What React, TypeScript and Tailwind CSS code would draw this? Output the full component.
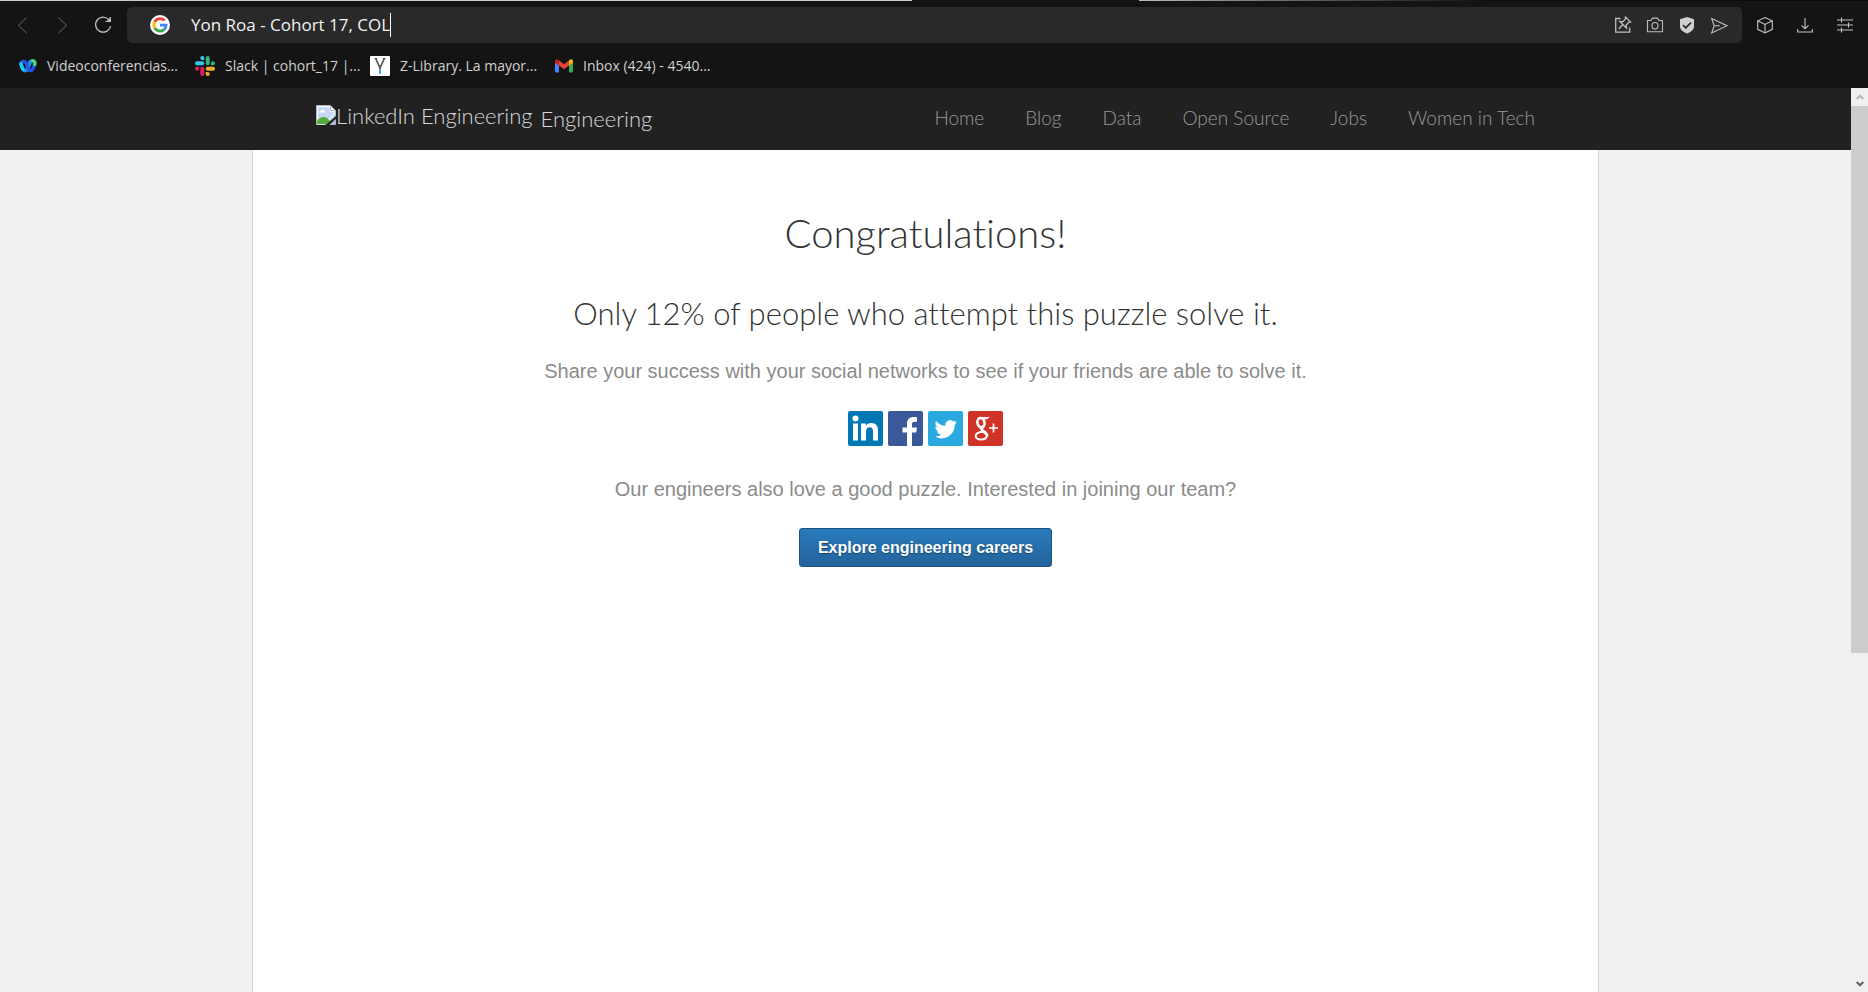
import type { ReactNode } from "react";

const bookmarks = [
  { label: "Videoconferencias...", icon: <WebexIcon />, width: "w-[164px]" },
  { label: "Slack | cohort_17 |...", icon: <SlackIcon />, width: "w-[163px]" },
  { label: "Z-Library. La mayor...", icon: <ZLibraryIcon />, width: "w-[173px]" },
  { label: "Inbox (424) - 4540...", icon: <GmailIcon />, width: "w-[165px]" },
];

const navLinks = ["Home", "Blog", "Data", "Open Source", "Jobs", "Women in Tech"];

const shareLinks = [
  { label: "LinkedIn", icon: <LinkedInIcon /> },
  { label: "Facebook", icon: <FacebookIcon /> },
  { label: "Twitter", icon: <TwitterIcon /> },
  { label: "Google Plus", icon: <GooglePlusIcon /> },
];

function GoogleIcon() {
  return (
    <svg viewBox="0 0 20 20" className="size-5 shrink-0" aria-hidden="true">
      <circle cx="10" cy="10" r="10" fill="#fff" />
      <g fill="none" strokeWidth="2.8">
        <path d="M14.6 5.6A6.1 6.1 0 0 0 4.7 7" stroke="#ea4335" />
        <path d="M4.7 7a6.1 6.1 0 0 0 0 6" stroke="#fbbc05" />
        <path d="M4.7 13a6.1 6.1 0 0 0 9.3 1.6" stroke="#34a853" />
        <path d="M14 14.6a6 6 0 0 0 2.1-4.4H10" stroke="#4285f4" />
      </g>
    </svg>
  );
}

function WebexIcon() {
  return (
    <svg viewBox="0 0 18 14" className="w-[18px] shrink-0" aria-hidden="true">
      <path d="M10.500 3.500c1.500-2.200 4.600-2.200 5 .3-.4 4-1.700 7.600-4 7.700-2.200.1-3-2.500-3.800-5" fill="none" stroke="#1d52e8" strokeWidth="3.600" />
      <path d="M11.500 3c1.500-1.800 4-1.600 4.500.4.200.8 0 1.600-.2 2.400" fill="none" stroke="#4fe06a" strokeWidth="3" strokeLinecap="round" />
      <path d="M2 4.800c.9 4 2.200 6.800 4.400 6.800 2.600-.2 3.200-4.400 4.400-8" fill="none" stroke="#1b8df5" strokeWidth="3.800" strokeLinecap="round" />
      <path d="M2.200 4.800C2.400 2 5.400 1.600 6.800 3.800c1.200 2 1.700 4.600 3 6.800" fill="none" stroke="#2057e8" strokeWidth="3.200" strokeLinecap="round" />
      <path d="M2 4.800c.5 2.400 1.200 4.300 2.100 5.700" fill="none" stroke="#16d4f0" strokeWidth="3.200" strokeLinecap="round" />
    </svg>
  );
}

function SlackIcon() {
  return (
    <svg viewBox="0 0 20 20" className="size-5 shrink-0" aria-hidden="true">
      <g fill="#36c5f0">
        <rect y="5.300" width="9.200" height="4" rx="2" />
        <path d="M7.300 0a2 2 0 0 1 2 2v2h-2a2 2 0 0 1 0-4z" />
      </g>
      <g fill="#2eb67d">
        <rect x="10.700" width="4" height="9.200" rx="2" />
        <path d="M20 7.300a2 2 0 0 1-2 2h-2v-2a2 2 0 0 1 4 0z" />
      </g>
      <g fill="#ecb22e">
        <rect x="10.700" y="10.700" width="9.300" height="4" rx="2" />
        <path d="M12.700 20a2 2 0 0 1-2-2v-2h2a2 2 0 0 1 0 4z" />
      </g>
      <g fill="#e01e5a">
        <rect x="5.300" y="10.700" width="4" height="9.300" rx="2" />
        <path d="M0 12.700a2 2 0 0 1 2-2h2v2a2 2 0 0 1-4 0z" />
      </g>
    </svg>
  );
}

function ZLibraryIcon() {
  return (
    <svg viewBox="0 0 20 20" className="size-5 shrink-0" aria-hidden="true">
      <rect width="20" height="20" rx="1" fill="#fff" />
      <path d="M5.700 2.500 10 12l4.300-9.500" fill="none" stroke="#555" strokeWidth="1.700" />
      <path d="M4.500 2.500h2.600M13 2.500h2.600" stroke="#555" />
      <path d="M10 9.500V13" stroke="#555" strokeWidth="2" />
      <path d="M10 13.500v4.300" stroke="#29abe2" strokeWidth="2" />
    </svg>
  );
}

function GmailIcon() {
  return (
    <svg viewBox="0 0 18 14" className="w-[18px] shrink-0" aria-hidden="true">
      <path d="M0 3.500 4 6v7.500H1.200A1.200 1.200 0 0 1 0 12.300z" fill="#4285f4" />
      <path d="M18 3.500 14 6v7.500h2.800a1.200 1.200 0 0 0 1.200-1.200z" fill="#34a853" />
      <path d="M4 1.500 9 5.300l5-3.800v5L9 10.300 4 6.500z" fill="#ea4335" />
      <path d="M0 2.300C0 .4 2-.5 3.500.9l.5.6v5L0 3.800z" fill="#c5221f" />
      <path d="M18 2.300c0-1.900-2-2.800-3.500-1.400l-.5.6v5l4-2.700z" fill="#fbbc04" />
    </svg>
  );
}

function LineIcon({ children, className = "text-[#bdbdbd]" }: { children: ReactNode; className?: string }) {
  return (
    <svg
      viewBox="0 0 18 18"
      className={`size-[18px] shrink-0 ${className}`}
      fill="none"
      stroke="currentColor"
      strokeWidth="1.100"
      aria-hidden="true"
    >
      {children}
    </svg>
  );
}

function BrokenImageIcon() {
  return (
    <svg viewBox="0 0 20 20" className="size-5 shrink-0" aria-hidden="true">
      <path d="M.5.500h14l5 5v14H.500z" fill="#c3d9f7" stroke="#b5b5b5" />
      <path d="M1.500 1.500H14v4.800h4.500V8L9 19H1.500z" fill="#c3d9f7" stroke="#fff" />
      <path d="M14.500.500v5h5z" fill="#fff" stroke="#aaa" strokeWidth=".8" />
      <path d="M3.500 7.500a1.500 1.500 0 0 1 1.600-1.800 2 2 0 0 1 3.600.3 1.300 1.300 0 0 1 .8 1.500z" fill="#fff" />
      <path d="M1 19v-3c3-4.500 7.500-5 10.500-2.500L14 16l-3 3z" fill="#55ac39" />
      <path d="m9.500 20 10.500-9v3L13.500 20z" fill="#212121" />
      <path d="M14 19.500 19.500 14v5.500z" fill="#aab9cc" />
    </svg>
  );
}

function LinkedInIcon() {
  return (
    <svg viewBox="0 0 35 35" className="size-[35px]" aria-hidden="true">
      <rect width="35" height="35" rx="2" fill="#0077b5" />
      <circle cx="7.500" cy="7.500" r="3" fill="#fff" />
      <path d="M5 12.500h5V29.500H5zM13 12.500h4.800v2.300c1-1.700 2.800-2.800 5.300-2.800 5 0 6.900 3 6.900 7.800v9.700h-5v-8.700c0-2.800-.7-4.500-3.200-4.500-2.700 0-3.800 1.900-3.800 4.600v8.600h-5z" fill="#fff" />
    </svg>
  );
}

function FacebookIcon() {
  return (
    <svg viewBox="0 0 35 35" className="size-[35px]" aria-hidden="true">
      <rect width="35" height="35" rx="2" fill="#3b5998" />
      <path d="M19 35V21.500h-4.500v-5H19v-3.800C19 8.300 21.600 6 25.500 6c1.700 0 3 .1 3.500.2v4.500h-2.400c-2 0-2.600 1-2.600 2.600v3.200h4.900l-.7 5H24V35z" fill="#fff" />
    </svg>
  );
}

function TwitterIcon() {
  return (
    <svg viewBox="0 0 35 35" className="size-[35px]" aria-hidden="true">
      <rect width="35" height="35" rx="2" fill="#2aa9e0" />
      <path
        transform="translate(6.500 7) scale(.94)"
        d="M23.950 4.570a10 10 0 0 1-2.820.77 4.960 4.960 0 0 0 2.160-2.720c-.95.560-2 .960-3.130 1.190a4.920 4.920 0 0 0-8.380 4.480C7.690 8.090 4.070 6.130 1.640 3.160a4.820 4.820 0 0 0-.67 2.480c0 1.710.87 3.210 2.190 4.100a4.900 4.900 0 0 1-2.230-.62v.060a4.920 4.920 0 0 0 3.950 4.830 5 5 0 0 1-2.210.080 4.940 4.940 0 0 0 4.600 3.420A9.870 9.870 0 0 1 0 19.540a13.990 13.990 0 0 0 7.550 2.210c9.050 0 14-7.500 14-13.980 0-.210 0-.420-.020-.630A9.940 9.940 0 0 0 24 4.590z"
        fill="#fff"
      />
    </svg>
  );
}

function GooglePlusIcon() {
  return (
    <svg viewBox="0 0 35 35" className="size-[35px]" aria-hidden="true">
      <rect width="35" height="35" rx="2" fill="#d03427" />
      <g fill="none" stroke="#fff">
        <ellipse cx="13" cy="11.700" rx="3.500" ry="4.700" strokeWidth="2.600" transform="rotate(-12 13 11.700)" />
        <path d="M13 6.700h7l-2 1.300h-2" strokeWidth="1.200" />
        <path d="M15.500 15.500c-2.500 1.800-3 2.700-.8 4.200s4.800 2.800 4.300 5.500" strokeWidth="2.800" />
        <path d="M19 24.800c-.5 2.600-3 3.700-6 3.700-3.500 0-5.400-1.500-5.300-3.500.1-2.600 3.200-4.200 7.800-4.300" strokeWidth="2" />
        <path d="M25.500 12.500v9M21 17h9" strokeWidth="1.700" />
      </g>
    </svg>
  );
}

function ToolbarButton({ label, children }: { label: string; children: ReactNode }) {
  return (
    <button type="button" aria-label={label} className="flex shrink-0 items-center justify-center">
      {children}
    </button>
  );
}

function BrowserChrome() {
  return (
    <header className="bg-[#141414] font-['Open_Sans','Noto_Sans',sans-serif]">
      <div className="flex h-px" aria-hidden="true">
        <div className="w-[48.8%] bg-[#c9cccb]" />
        <div className="w-[12.2%] bg-[#141414]" />
        <div className="flex-1 bg-linear-to-r from-[#b9bcbb] to-[#0a0a0a] to-50%" />
      </div>
      <div className="flex items-center pt-1.5 pr-3.5 pl-3.5">
        <div className="flex w-[113px] shrink-0 gap-[22px]">
          <ToolbarButton label="Back">
            <LineIcon className="text-[#4a4a4a]">
              <path d="M12.500 1.500 4.500 9.300l8 7.700" />
            </LineIcon>
          </ToolbarButton>
          <ToolbarButton label="Forward">
            <LineIcon className="text-[#4a4a4a]">
              <path d="m4.500 1.500 8 7.800-8 7.700" />
            </LineIcon>
          </ToolbarButton>
          <ToolbarButton label="Reload">
            <LineIcon className="text-[#c4c4c4]">
              <path d="M15.600 4.900A7.500 7.500 0 1 0 16.500 10M16.300 1v4.500h-4.800" strokeWidth="1.200" />
              <path d="M16.500 1.500v4h-4z" fill="currentColor" stroke="none" />
            </LineIcon>
          </ToolbarButton>
        </div>
        <div className="flex h-9 min-w-0 flex-1 items-center rounded-[5px] bg-[#292929] pr-3.5 pl-[23px]">
          <GoogleIcon />
          <div className="flex min-w-0 flex-1 items-center pl-[21px]">
            <input
              type="text"
              aria-label="Address"
              defaultValue="Yon Roa - Cohort 17, COL"
              className="field-sizing-content bg-transparent text-[17px] leading-6 text-[#f2f2f2] outline-none"
            />
            <span className="h-6 w-px bg-white" aria-hidden="true" />
          </div>
          <div className="flex gap-3.5">
            <ToolbarButton label="Pin">
              <LineIcon>
                <path d="M6.500 2.500H1.700v13.700h14v-4.700" strokeWidth="1.300" />
                <path d="m11.500 1 5 5-1.700.3-2.500 2.500.2 3.200-6.700-6.500 3.200.1L11.300 3zM8.700 8.800l-4 4.200" strokeWidth="1.300" />
              </LineIcon>
            </ToolbarButton>
            <ToolbarButton label="Snapshot">
              <LineIcon>
                <path d="M1.500 4.500H5l1.500-2.400h5L13 4.500h3.500v11.300h-15z" strokeLinejoin="round" />
                <ellipse cx="9" cy="9.800" rx="3" ry="3.300" />
              </LineIcon>
            </ToolbarButton>
            <ToolbarButton label="Ad blocker">
              <LineIcon>
                <path d="m9 1 7 2.200v7.300c0 3.500-4 6-7 7-3-1-7-3.500-7-7V3.200z" fill="#cfcfcf" stroke="none" />
                <path d="m5 9.200 2.800 2.600L13 6.700" stroke="#292929" strokeWidth="1.700" />
              </LineIcon>
            </ToolbarButton>
            <ToolbarButton label="Send">
              <LineIcon>
                <path d="M1.700 2.500 17 9.700 1.700 17l2.500-7.300z" />
                <path d="M4.200 9.700h5.500" />
              </LineIcon>
            </ToolbarButton>
          </div>
        </div>
        <div className="flex shrink-0 gap-[22px] pl-3.5">
          <ToolbarButton label="Wallet">
            <LineIcon className="text-[#c4c4c4]">
              <path d="m9 1.500 7.300 3.300v8.500L9 17l-7.300-3.700V4.800zM1.700 4.800 9 8.500l7.300-3.700M9 8.500V17" />
            </LineIcon>
          </ToolbarButton>
          <ToolbarButton label="Downloads">
            <LineIcon className="text-[#c4c4c4]">
              <path d="M9 2v10.500M5.500 9.300 9 12.700l3.500-3.400M1.700 13v3h14.600v-3" />
            </LineIcon>
          </ToolbarButton>
          <ToolbarButton label="Easy setup">
            <LineIcon className="text-[#c4c4c4]">
              <path d="M1 4h16M1 9h16M1 14h16M5.500 1.500v5M12.500 6.500v5M5.500 11.500v5" />
            </LineIcon>
          </ToolbarButton>
        </div>
      </div>
      <nav aria-label="Bookmarks" className="flex h-[45px] items-center gap-3 pl-[19px] text-sm text-[#d0d0d0]">
        {bookmarks.map((bookmark) => (
          <a key={bookmark.label} href="#" className={`flex items-center gap-2.5 whitespace-nowrap ${bookmark.width}`}>
            {bookmark.icon}
            {bookmark.label}
          </a>
        ))}
      </nav>
    </header>
  );
}

function SiteHeader() {
  return (
    <header className="bg-[#212121] font-['Lato',sans-serif] font-light">
      <div className="mx-auto flex h-[62px] max-w-[1347px] items-center justify-between px-16 pb-0.5">
        <a href="#" className="flex items-center gap-2 text-[22px] text-[#d8d8d8]">
          <span className="flex items-center pb-1.5">
            <BrokenImageIcon />
            LinkedIn Engineering
          </span>
          <span>Engineering</span>
        </a>
        <nav aria-label="Main" className="flex gap-[41px] text-[19px] text-[#999]">
          {navLinks.map((link) => (
            <a key={link} href="#">
              {link}
            </a>
          ))}
        </nav>
      </div>
    </header>
  );
}

function Scrollbar() {
  return (
    <div className="flex w-[17px] shrink-0 flex-col bg-[#f0f0f0]" aria-hidden="true">
      <div className="flex h-[18px] items-center justify-center">
        <svg viewBox="0 0 8 6" className="w-2" fill="none" stroke="#b4b4b4" strokeWidth="2">
          <path d="M.7 5 4 1.700 7.300 5" />
        </svg>
      </div>
      <div className="flex-1">
        <div className="h-[63%] bg-[#cdcdcd]" />
      </div>
      <div className="flex h-[17px] items-center justify-center">
        <svg viewBox="0 0 8 6" className="w-2" fill="none" stroke="#606060" strokeWidth="2">
          <path d="M.7 1 4 4.300 7.300 1" />
        </svg>
      </div>
    </div>
  );
}

export default function App() {
  return (
    <div className="flex min-h-screen flex-col">
      <BrowserChrome />
      <div className="flex flex-1">
        <div className="flex min-w-0 flex-1 flex-col bg-[#f1f1f1]">
          <SiteHeader />
          <main className="mx-auto flex w-full max-w-[1347px] flex-1 flex-col items-center border-x border-[#d5d5d5] bg-white pt-[58px] text-center font-['Liberation_Sans',Arial,sans-serif]">
            <h1 className="font-['Lato',sans-serif] text-[40px] leading-[50px] font-light text-[#333] [font-variant-ligatures:none]">
              Congratulations!
            </h1>
            <h2 className="mt-[35px] font-['Lato',sans-serif] text-[31px] leading-10 font-light text-[#333] [font-variant-ligatures:none]">
              Only 12% of people who attempt this puzzle solve it.
            </h2>
            <p className="mt-[23px] text-xl leading-[30px] text-[#8b8b8b]">
              Share your success with your social networks to see if your friends are able to solve it.
            </p>
            <div className="mt-[25px] flex gap-[5px]">
              {shareLinks.map((share) => (
                <a key={share.label} href="#" aria-label={share.label}>
                  {share.icon}
                </a>
              ))}
            </div>
            <p className="mt-7 text-xl leading-[30px] text-[#8b8b8b]">
              Our engineers also love a good puzzle. Interested in joining our team?
            </p>
            <button
              type="button"
              className="mt-6 h-[39px] rounded-[3px] border border-[#1b5480] bg-linear-to-b from-[#287bbc] to-[#23639a] px-[18px] text-base font-bold text-white text-shadow-[0_1px_1px_rgb(0_0_0/0.4)]"
            >
              Explore engineering careers
            </button>
          </main>
        </div>
        <Scrollbar />
      </div>
    </div>
  );
}
